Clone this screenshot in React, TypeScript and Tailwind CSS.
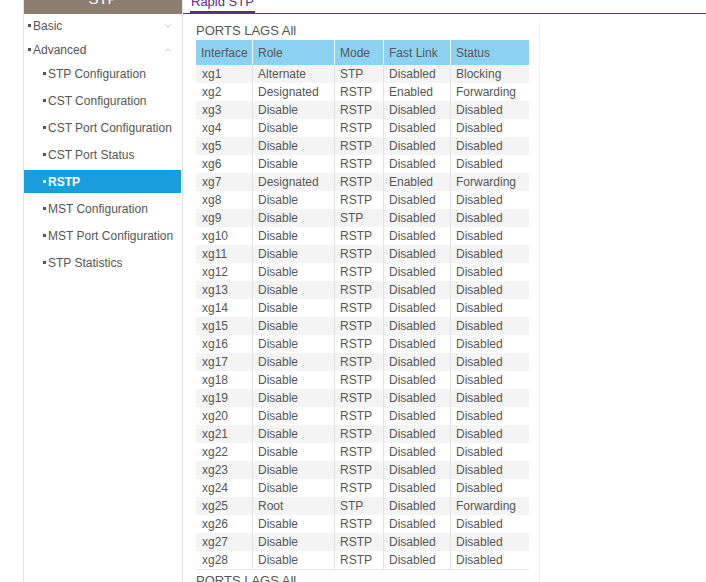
import { ChevronDown, ChevronUp } from 'lucide-react';

type Row = [string, string, string, string, string];

const rows: Row[] = [
  ['xg1', 'Alternate', 'STP', 'Disabled', 'Blocking'],
  ['xg2', 'Designated', 'RSTP', 'Enabled', 'Forwarding'],
  ['xg3', 'Disable', 'RSTP', 'Disabled', 'Disabled'],
  ['xg4', 'Disable', 'RSTP', 'Disabled', 'Disabled'],
  ['xg5', 'Disable', 'RSTP', 'Disabled', 'Disabled'],
  ['xg6', 'Disable', 'RSTP', 'Disabled', 'Disabled'],
  ['xg7', 'Designated', 'RSTP', 'Enabled', 'Forwarding'],
  ['xg8', 'Disable', 'RSTP', 'Disabled', 'Disabled'],
  ['xg9', 'Disable', 'STP', 'Disabled', 'Disabled'],
  ...Array.from({ length: 15 }, (_, i): Row => [`xg${i + 10}`, 'Disable', 'RSTP', 'Disabled', 'Disabled']),
  ['xg25', 'Root', 'STP', 'Disabled', 'Forwarding'],
  ['xg26', 'Disable', 'RSTP', 'Disabled', 'Disabled'],
  ['xg27', 'Disable', 'RSTP', 'Disabled', 'Disabled'],
  ['xg28', 'Disable', 'RSTP', 'Disabled', 'Disabled'],
];

const subItems = [
  'STP Configuration',
  'CST Configuration',
  'CST Port Configuration',
  'CST Port Status',
  'RSTP',
  'MST Configuration',
  'MST Port Configuration',
  'STP Statistics',
];

const cols = ['w-[56px]', 'w-[82px]', 'w-[49px]', 'w-[67px]', 'w-[79px]'];
const headers = ['Interface', 'Role', 'Mode', 'Fast Link', 'Status'];

function Bullet() {
  return <span className="inline-block w-[3px] h-[3px] bg-current mr-[2px] mb-[3px]" />;
}

export default function App() {
  return (
    <div
      className="w-[706px] h-[582px] overflow-hidden bg-white flex text-[12px] text-[#555]"
      style={{ fontFamily: '"Liberation Sans", Arial, sans-serif' }}
    >
      {/* Sidebar */}
      <div className="ml-[23px] w-[160px] shrink-0 border-x border-[#e3e3e3] flex flex-col">
        <div className="h-[30px] -mt-[16px] bg-[#8c7d6e] text-white text-[15px] flex items-center justify-center">
          STP
        </div>
        <div className="flex items-center justify-between h-[22px] pt-[1px] pl-[4px] pr-[9px]">
          <span>
            <Bullet />Basic
          </span>
          <ChevronDown size={10} strokeWidth={1.5} className="text-[#999]" />
        </div>
        <div className="flex items-center justify-between h-[24px] pt-[3px] pl-[4px] pr-[9px]">
          <span>
            <Bullet />Advanced
          </span>
          <ChevronUp size={10} strokeWidth={1.5} className="text-[#999]" />
        </div>
        {subItems.map((item) => {
          const active = item === 'RSTP';
          return (
            <div key={item} className="h-[27px] py-[2px]">
              <div
                className={`h-full flex items-center pl-[19px] ${
                  active ? 'bg-[#1a9edb] text-white font-bold mr-[1px]' : ''
                }`}
              >
                <span className="whitespace-nowrap">
                  <Bullet />
                  {item}
                </span>
              </div>
            </div>
          );
        })}
      </div>

      {/* Main */}
      <div className="flex-1 flex flex-col">
        <div className="-mt-[8px] border-b border-[#5c3d73] flex pl-[7px]">
          <div className="h-[21px] px-[1px] text-[#5a2d82] text-[13px] border-b-[2px] border-[#5a2d82] whitespace-nowrap">
            Rapid STP
          </div>
        </div>
        <div className="pl-[13px] mt-[9px] w-[357px] border-r border-[#f0f0f0] flex-1">
          <div className="text-[13px] h-[17px] leading-[15px]">PORTS LAGS All</div>
          <div className="w-[333px]">
            <div className="flex h-[25px] bg-[#8dd2f1]">
              {headers.map((h, i) => (
                <div
                  key={h}
                  className={`${cols[i]} flex items-center pl-[5px] ${i > 0 ? 'border-l border-[#f4f4f4]' : ''}`}
                >
                  {h}
                </div>
              ))}
            </div>
            {rows.map((r, ri) => (
              <div key={r[0]} className={`flex h-[18px] ${ri % 2 === 0 ? 'bg-[#f4f4f4]' : 'bg-white'}`}>
                {r.map((c, i) => (
                  <div
                    key={i}
                    className={`${cols[i]} flex items-center ${i === 0 ? 'pl-[6px]' : 'pl-[5px] border-l border-[#e2e2e2]'}`}
                  >
                    {c}
                  </div>
                ))}
              </div>
            ))}
            <div className="border-t border-[#e6e6e6]" />
          </div>
          <div className="text-[13px] mt-[2px] leading-[17px]">PORTS LAGS All</div>
        </div>
      </div>
    </div>
  );
}
